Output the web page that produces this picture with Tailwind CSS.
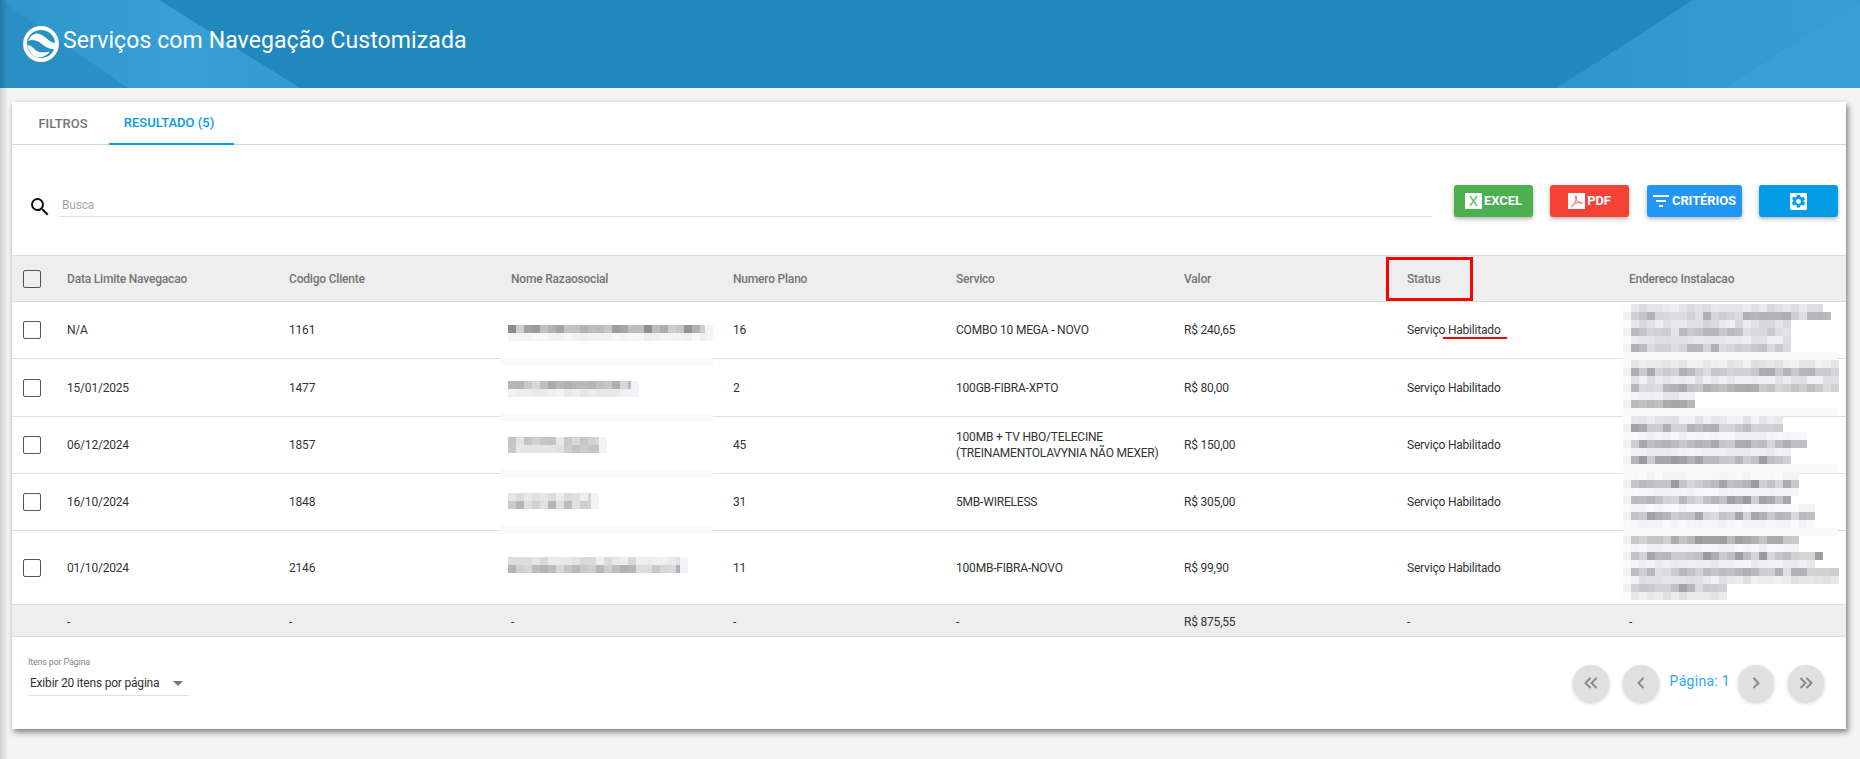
<!DOCTYPE html>
<html lang="pt-BR">
<head>
    <meta charset="UTF-8">
    <title>Serviços com Navegação Customizada</title>
    <script src="https://cdn.jsdelivr.net/npm/@tailwindcss/browser@4"></script>
</head>
<body class="relative bg-[#f4f4f4] h-[759px] overflow-hidden font-['Roboto',sans-serif] text-[12px] text-[#333] tracking-[-0.2px]">

    <!-- Header -->
    <header class="relative h-[88px] bg-[#2088bd] flex items-center pl-[23px] pb-[1px] overflow-hidden">
        <svg class="absolute inset-0" width="1860" height="88" viewBox="0 0 1860 88">
            <defs>
                <linearGradient id="hl" x1="0" y1="0" x2="1" y2="0">
                    <stop offset="0" stop-color="#2f95cb"/>
                    <stop offset="0.6" stop-color="#38a0d7"/>
                    <stop offset="1" stop-color="#349bd1"/>
                </linearGradient>
                <linearGradient id="hr" x1="0" y1="0" x2="1" y2="0">
                    <stop offset="0" stop-color="#2f96cc"/>
                    <stop offset="1" stop-color="#389fd5"/>
                </linearGradient>
            </defs>
            <polygon points="0,88 0,0 128,88" fill="#2a8fc5"/>
            <polygon points="0,0 159,0 300,88 128,88" fill="url(#hl)"/>
            <polygon points="1693,0 1860,0 1723,88 1557,88" fill="url(#hr)"/>
            <polygon points="1860,0 1860,88 1723,88" fill="#389fd5"/>
        </svg>
        <svg class="relative shrink-0" width="36" height="36" viewBox="0 0 36 36">
            <circle cx="18" cy="18" r="16" fill="none" stroke="#fff" stroke-width="3.8"/>
            <path d="M5 15C9 7 14 6 19 9C24 12 27 17 33 17L33 23C26 24 21 20 17 16.500C13 14 9 13 5 15Z" fill="#fff"/>
            <path d="M4 19C8 19 10 22 13 24.500C16 26.500 21 27 27 25.500C23 31 15 33 11 30C8 28 5 24 4 19Z" fill="#fff"/>
        </svg>
        <h1 class="relative ml-[4px] mb-[7px] text-[23px] leading-none text-white font-normal tracking-[0.1px]">Serviços com Navegação Customizada</h1>
    </header>
    <div class="absolute top-0 left-0 h-full w-[8px] bg-linear-to-r from-black/15 to-transparent"></div>

    <!-- Card -->
    <main class="relative ml-[12px] mr-[14px] mt-[14px] h-[627px] bg-white shadow-[2px_3px_6px_rgba(0,0,0,0.5)]">

        <!-- Tabs -->
        <div class="flex h-[43px] pl-[8px] border-b border-[#d5d5d5] text-[13px] font-medium uppercase tracking-normal">
            <a class="w-[89px] h-[42px] pr-[3px] pt-[1px] flex items-center justify-center text-[#757575]">Filtros</a>
            <a class="w-[125px] h-[43px] pr-[5px] flex items-center justify-center text-[#039be5] border-b-2 border-[#039be5]">Resultado (5)</a>
        </div>

        <!-- Search and actions -->
        <div class="flex h-[110px] pt-[39px] pl-[16px] pr-[8px]">
            <svg class="mt-[11px] shrink-0" width="24" height="24" viewBox="0 0 24 24" fill="#111">
                <path d="M15.5 14h-.79l-.28-.27A6.47 6.47 0 0 0 16 9.5 6.5 6.5 0 1 0 9.5 16c1.61 0 3.09-.59 4.23-1.57l.27.28v.79l5 4.99L20.49 19l-4.99-5zm-6 0C7.01 14 5 11.99 5 9.5S7.01 5 9.5 5 14 7.01 14 9.5 11.99 14 9.5 14z"/>
            </svg>
            <div class="ml-[7px] w-[1373px] h-[33px] border-b border-[#ddd] pl-[3px] pt-[14px] text-[12px] leading-[14px] text-[#a8a8a8]">Busca</div>

            <div class="ml-[22px] mt-[1px] flex h-[32px] text-white text-[13px] font-bold uppercase tracking-[-0.1px]">
                <button class="w-[79px] h-[32px] rounded-[3px] bg-[#4caf50] shadow-[0_2px_4px_rgba(0,0,0,0.3)] flex items-center justify-center gap-[2px]">
                    <svg width="17" height="16" viewBox="0 0 17 16"><rect width="17" height="16" fill="#fff"/><path d="M5 3l7 10M12 3L5 13" stroke="#6fbf73" stroke-width="1.6" fill="none"/></svg>
                    <span class="uppercase">Excel</span>
                </button>
                <button class="ml-[17px] w-[79px] h-[32px] rounded-[3px] bg-[#f44336] shadow-[0_2px_4px_rgba(0,0,0,0.3)] flex items-center justify-center gap-[2px]">
                    <svg width="17" height="16" viewBox="0 0 17 16"><rect width="17" height="16" fill="#fff"/><path d="M3 14c2-1 4-4 5-7S8 2 7.5 3 8 7 10 9s4 2 4 1-3-1-6 0-4 3-5 4z" stroke="#ef6a60" stroke-width="1" fill="none"/></svg>
                    <span class="uppercase">PDF</span>
                </button>
                <button class="ml-[18px] w-[95px] h-[32px] rounded-[3px] bg-[#2196f3] shadow-[0_2px_4px_rgba(0,0,0,0.3)] flex items-center justify-center gap-[3px]">
                    <svg width="16" height="12" viewBox="0 0 16 12" fill="#fff"><rect y="0" width="16" height="2"/><rect x="3" y="5" width="10" height="2"/><rect x="6" y="10" width="4" height="2"/></svg>
                    <span class="uppercase">Critérios</span>
                </button>
                <button class="ml-[17px] w-[79px] h-[32px] rounded-[3px] bg-[#039be5] shadow-[0_2px_4px_rgba(0,0,0,0.3)] flex items-center justify-center">
                    <svg width="17" height="17" viewBox="0 0 24 24"><rect width="24" height="24" rx="2" fill="#fff"/><path fill="#039be5" d="M19.1 12.9c0-.3.1-.6.1-.9s0-.6-.1-.9l2-1.5c.2-.1.2-.4.1-.6l-1.9-3.3c-.1-.2-.4-.3-.6-.2l-2.4 1c-.5-.4-1-.7-1.6-.9l-.4-2.5c0-.3-.2-.4-.5-.4h-3.8c-.2 0-.4.2-.5.4l-.3 2.5c-.6.2-1.1.6-1.6.9l-2.4-1c-.2-.1-.5 0-.6.2L2.7 8c-.1.2-.1.5.1.6l2 1.5c0 .3-.1.6-.1.9s0 .6.1.9l-2 1.5c-.2.1-.2.4-.1.6l1.9 3.3c.1.2.4.3.6.2l2.4-1c.5.4 1 .7 1.6.9l.4 2.5c0 .2.2.4.5.4h3.8c.2 0 .4-.2.5-.4l.4-2.5c.6-.2 1.1-.6 1.6-.9l2.4 1c.2.1.5 0 .6-.2l1.9-3.3c.1-.2.1-.5-.1-.6l-2.1-1.5zM12 15.5a3.5 3.5 0 1 1 0-7 3.5 3.5 0 0 1 0 7z"/></svg>
                </button>
            </div>
        </div>

        <!-- Table -->
        <table class="w-full table-fixed text-left">
            <colgroup>
                <col class="w-[43px]"><col class="w-[222px]"><col class="w-[222px]"><col class="w-[222px]"><col class="w-[223px]"><col class="w-[228px]"><col class="w-[223px]"><col class="w-[221px]"><col class="w-[230px]">
            </colgroup>
            <thead>
                <tr class="h-[46px] bg-[#eeeeee] border-y border-[#dcdcdc] text-[#757575] text-[12px]">
                    <th class="pl-[11px]"><span class="block w-[18px] h-[18px] border border-[#555] rounded-[2px]"></span></th>
                    <th class="pl-[12px] font-medium">Data Limite Navegacao</th>
                    <th class="pl-[12px] font-medium">Codigo Cliente</th>
                    <th class="pl-[12px] font-medium">Nome Razaosocial</th>
                    <th class="pl-[12px] font-medium">Numero Plano</th>
                    <th class="pl-[12px] font-medium">Servico</th>
                    <th class="pl-[12px] font-medium">Valor</th>
                    <th class="relative pl-[12px] font-medium">Status
                        <span class="absolute top-[1px] left-[-9px] w-[87px] h-[44px] border-[3px] border-[#f00]"></span>
                    </th>
                    <th class="pl-[13px] font-medium">Endereco Instalacao</th>
                </tr>
            </thead>
            <tbody>
                <tr class="h-[57px] border-b border-[#dedede]">
                    <td class="pl-[11px]"><span class="block w-[18px] h-[18px] border border-[#555] rounded-[2px]"></span></td>
                    <td class="pl-[12px]">N/A</td>
                    <td class="pl-[12px]">1161</td>
                    <td class="pl-[12px]"></td>
                    <td class="pl-[12px]">16</td>
                    <td class="pl-[12px]">COMBO 10 MEGA - NOVO</td>
                    <td class="pl-[12px]">R$ 240,65</td>
                    <td class="relative pl-[12px]">Serviço Habilitado
                        <span class="absolute left-[48px] top-[35px] w-[64px] h-[2px] bg-[#f00]"></span>
                    </td>
                    <td class="pl-[12px]"></td>
                </tr>
                <tr class="h-[58px] border-b border-[#dedede]">
                    <td class="pl-[11px]"><span class="block w-[18px] h-[18px] border border-[#555] rounded-[2px]"></span></td>
                    <td class="pl-[12px]">15/01/2025</td>
                    <td class="pl-[12px]">1477</td>
                    <td class="pl-[12px]"></td>
                    <td class="pl-[12px]">2</td>
                    <td class="pl-[12px]">100GB-FIBRA-XPTO</td>
                    <td class="pl-[12px]">R$ 80,00</td>
                    <td class="pl-[12px]">Serviço Habilitado</td>
                    <td class="pl-[12px]"></td>
                </tr>
                <tr class="h-[57px] border-b border-[#dedede]">
                    <td class="pl-[11px]"><span class="block w-[18px] h-[18px] border border-[#555] rounded-[2px]"></span></td>
                    <td class="pl-[12px]">06/12/2024</td>
                    <td class="pl-[12px]">1857</td>
                    <td class="pl-[12px]"></td>
                    <td class="pl-[12px]">45</td>
                    <td class="pl-[12px] leading-[16px]">100MB + TV HBO/TELECINE<br>(TREINAMENTOLAVYNIA NÃO MEXER)</td>
                    <td class="pl-[12px]">R$ 150,00</td>
                    <td class="pl-[12px]">Serviço Habilitado</td>
                    <td class="pl-[12px]"></td>
                </tr>
                <tr class="h-[57px] border-b border-[#dedede]">
                    <td class="pl-[11px]"><span class="block w-[18px] h-[18px] border border-[#555] rounded-[2px]"></span></td>
                    <td class="pl-[12px]">16/10/2024</td>
                    <td class="pl-[12px]">1848</td>
                    <td class="pl-[12px]"></td>
                    <td class="pl-[12px]">31</td>
                    <td class="pl-[12px]">5MB-WIRELESS</td>
                    <td class="pl-[12px]">R$ 305,00</td>
                    <td class="pl-[12px]">Serviço Habilitado</td>
                    <td class="pl-[12px]"></td>
                </tr>
                <tr class="h-[74px]">
                    <td class="pl-[11px]"><span class="block w-[18px] h-[18px] border border-[#555] rounded-[2px]"></span></td>
                    <td class="pl-[12px]">01/10/2024</td>
                    <td class="pl-[12px]">2146</td>
                    <td class="pl-[12px]"></td>
                    <td class="pl-[12px]">11</td>
                    <td class="pl-[12px]">100MB-FIBRA-NOVO</td>
                    <td class="pl-[12px]">R$ 99,90</td>
                    <td class="pl-[12px]">Serviço Habilitado</td>
                    <td class="pl-[12px]"></td>
                </tr>
            </tbody>
            <tfoot>
                <tr class="h-[32px] bg-[#eeeeee] border-y border-[#dcdcdc]">
                    <td></td>
                    <td class="pl-[12px] pt-[3px]">-</td>
                    <td class="pl-[12px] pt-[3px]">-</td>
                    <td class="pl-[12px] pt-[3px]">-</td>
                    <td class="pl-[12px] pt-[3px]">-</td>
                    <td class="pl-[12px] pt-[3px]">-</td>
                    <td class="pl-[12px] pt-[3px]">R$ 875,55</td>
                    <td class="pl-[12px] pt-[3px]">-</td>
                    <td class="pl-[13px] pt-[3px]">-</td>
                </tr>
            </tfoot>
        </table>

        <!-- Pager -->
        <div class="flex justify-between pl-[16px] pr-[22px] pt-[20px]">
            <div class="w-[161px]">
                <div class="text-[9px] leading-[11px] text-[#888]">Itens por Página</div>
                <div class="flex items-center justify-between h-[25px] pl-[2px] pr-[6px] mt-[3px] border-b border-[#ddd] text-[12px] text-[#333]">
                    <span>Exibir 20 itens por página</span>
                    <span class="w-0 h-0 border-x-[5px] border-x-transparent border-t-[5px] border-t-[#757575]"></span>
                </div>
            </div>
            <div class="flex items-start mt-[8px]">
                <button class="w-[36px] h-[36px] rounded-full bg-[#e0e0e0] shadow-[0_2px_4px_rgba(0,0,0,0.2)] flex items-center justify-center">
                    <svg width="24" height="24" viewBox="0 0 24 24" fill="none" stroke="#8a8a8a" stroke-width="2"><path d="M11.5 7l-5 5 5 5M17.5 7l-5 5 5 5"/></svg>
                </button>
                <button class="ml-[14px] w-[36px] h-[36px] rounded-full bg-[#e0e0e0] shadow-[0_2px_4px_rgba(0,0,0,0.2)] flex items-center justify-center">
                    <svg width="24" height="24" viewBox="0 0 24 24" fill="none" stroke="#8a8a8a" stroke-width="2"><path d="M14.5 7l-5 5 5 5"/></svg>
                </button>
                <span class="ml-[11px] mr-[8px] mt-[6px] text-[14px] leading-[20px] tracking-[0.3px] text-[#29a9f5]">Página: 1</span>
                <button class="w-[36px] h-[36px] rounded-full bg-[#e0e0e0] shadow-[0_2px_4px_rgba(0,0,0,0.2)] flex items-center justify-center">
                    <svg width="24" height="24" viewBox="0 0 24 24" fill="none" stroke="#8a8a8a" stroke-width="2"><path d="M9.5 7l5 5-5 5"/></svg>
                </button>
                <button class="ml-[14px] w-[36px] h-[36px] rounded-full bg-[#e0e0e0] shadow-[0_2px_4px_rgba(0,0,0,0.2)] flex items-center justify-center">
                    <svg width="24" height="24" viewBox="0 0 24 24" fill="none" stroke="#8a8a8a" stroke-width="2"><path d="M6.5 7l5 5-5 5M12.5 7l5 5-5 5"/></svg>
                </button>
            </div>
        </div>
    </main>

    <!-- Blurred personal data lies over the table -->
    <svg id="blur" class="absolute top-0 left-0 pointer-events-none" width="1860" height="759"></svg>

    <script>
        // [y, x end, grey level]
        var names = [
            [325, 713, 176], [333, 713, 243],
            [381, 639, 190], [389, 639, 234],
            [437, 607, 212], [445, 607, 214],
            [493, 599, 226], [501, 599, 204],
            [557, 688, 228], [565, 688, 194]
        ];
        var addresses = [
            [304, 1821, 228], [312, 1830, 200], [320, 1788, 226], [328, 1788, 205], [336, 1788, 226], [344, 1788, 198],
            [360, 1838, 234], [368, 1838, 196], [376, 1838, 232], [384, 1838, 196], [392, 1689, 236], [400, 1689, 192],
            [416, 1780, 234], [424, 1780, 190], [432, 1805, 243], [440, 1805, 186], [448, 1788, 240], [456, 1788, 182],
            [472, 1797, 247], [480, 1797, 184], [488, 1797, 245], [496, 1788, 186], [504, 1813, 247], [512, 1813, 188], [520, 1813, 246],
            [536, 1797, 186], [544, 1797, 242], [552, 1821, 186], [560, 1813, 240], [568, 1838, 200], [576, 1838, 232], [584, 1722, 192], [592, 1722, 234]
        ];
        // separators hidden by the pixelated patches
        var bands = [
            [500, 357, 213], [500, 413, 213], [500, 469, 213], [500, 525, 213],
            [1623, 352, 215], [1623, 408, 215], [1623, 464, 215], [1623, 528, 215]
        ];
        var svg = document.getElementById('blur');
        var seed = 7;
        function rnd() {
            seed = (seed * 16807) % 2147483647;
            return seed / 2147483647;
        }
        function rect(x, y, w, h, fill) {
            var r = document.createElementNS('http://www.w3.org/2000/svg', 'rect');
            r.setAttribute('x', x); r.setAttribute('y', y);
            r.setAttribute('width', w); r.setAttribute('height', h);
            r.setAttribute('fill', fill);
            svg.appendChild(r);
        }
        function grey(level) {
            var v = Math.min(252, Math.round(level + (rnd() - 0.5) * (256 - level) * 0.9));
            return 'rgb(' + v + ',' + v + ',' + (v + 2) + ')';
        }
        bands.forEach(function (b) { rect(b[0], b[1], b[2], 8, '#fafafa'); });
        names.forEach(function (r) {
            for (var x = 508; x < r[1] - 8; x += 8) rect(x, r[0], 8, 8, grey(r[2]));
            rect(r[1] - 8, r[0], 8, 8, '#f2f4f8');
        });
        addresses.forEach(function (r) {
            rect(1623, r[0], 8, 8, r[2] < 215 ? '#f5f1ea' : '#fbfaf8');
            for (var x = 1631; x < r[1]; x += 8) rect(x, r[0], 8, 8, grey(r[2]));
        });
    </script>
</body>
</html>
